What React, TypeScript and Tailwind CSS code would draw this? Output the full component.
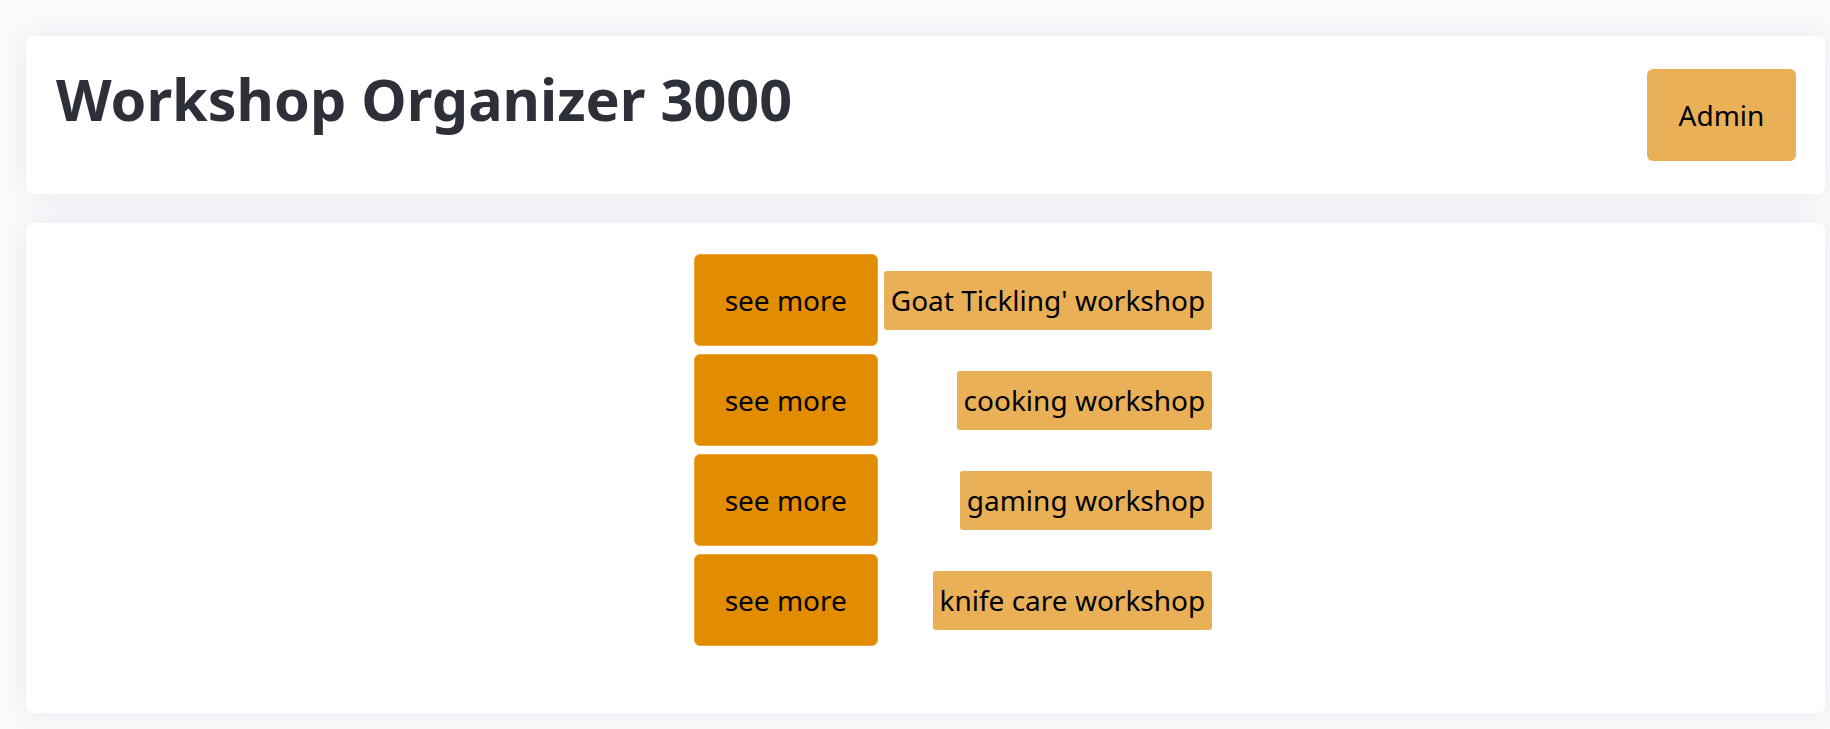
import React from "react";

const rows = [
  "Goat Tickling' workshop",
  "cooking workshop",
  "gaming workshop",
  "knife care workshop",
];

export default function App() {
  return (
    <div
      className="min-h-screen bg-[#fafbfc] pl-[26px] pr-[5px] pt-[36px] pb-[17px] text-black"
      style={{ fontFamily: '"Noto Sans", "Open Sans", sans-serif' }}
    >
      <header className="flex items-start justify-between rounded-lg bg-white py-[33px] pl-[30px] pr-[29px] shadow-[0_0_30px_rgba(60,70,130,0.10)]">
        <h1 className="mt-[2px] text-[57.5px] font-bold leading-none text-[#2d3038]">
          Workshop Organizer 3000
        </h1>
        <button className="flex h-[92px] w-[149px] items-center justify-center rounded-md bg-[#e9b057] text-[28px] text-black">
          Admin
        </button>
      </header>

      <main className="mt-[29px] flex justify-center rounded-lg bg-white pb-[67px] pl-[55px] pt-[31px] shadow-[0_0_30px_rgba(60,70,130,0.10)]">
        <div className="grid grid-cols-[184px_auto] items-center gap-x-[6px] gap-y-[8px]">
          {rows.map((name) => (
            <React.Fragment key={name}>
              <button className="flex h-[92px] w-[184px] items-center justify-center rounded-md border border-[#e9a640] bg-[#e28c00] text-[28px] text-black">
                see more
              </button>
              <div className="flex justify-end">
                <span className="flex h-[59px] items-center rounded-[3px] bg-[#e9b057] px-[7px] text-[28px] text-black">
                  {name}
                </span>
              </div>
            </React.Fragment>
          ))}
        </div>
      </main>
    </div>
  );
}
